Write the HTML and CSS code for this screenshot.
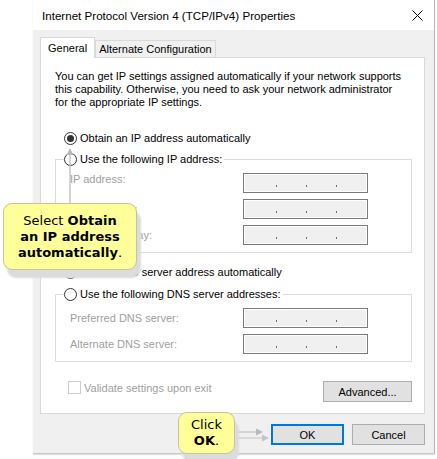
FILE: index.html
```html
<!DOCTYPE html>
<html lang="en">
<head>
    <meta charset="UTF-8">
    <title>Internet Protocol Version 4 (TCP/IPv4) Properties</title>
    <link rel="stylesheet" href="styles.css">
</head>
<body>
    <div class="screen">
        <div class="dialog">
            <div class="titlebar">
                <span class="title">Internet Protocol Version 4 (TCP/IPv4) Properties</span>
                <svg class="close" width="11" height="11" viewBox="0 0 11 11">
                    <path d="M0.5 0.5 L10.5 10.5 M10.5 0.5 L0.5 10.5" stroke="#000" stroke-width="1"/>
                </svg>
            </div>

            <div class="body">
                <div class="tabs">
                    <div class="tab active">General</div>
                    <div class="tab">Alternate Configuration</div>
                </div>

                <div class="panel">
                    <p class="intro">You can get IP settings assigned automatically if your network supports<br>this capability. Otherwise, you need to ask your network administrator<br>for the appropriate IP settings.</p>

                    <div class="option first"><span class="radio checked"></span>Obtain an IP address automatically</div>

                    <fieldset class="group">
                        <legend><span class="radio"></span>Use the following IP address:</legend>
                        <div class="field top"><span>IP address:</span><div class="ipbox"><i></i><i></i><i></i></div></div>
                        <div class="field"><span>Subnet mask:</span><div class="ipbox"><i></i><i></i><i></i></div></div>
                        <div class="field"><span>Default gateway:</span><div class="ipbox"><i></i><i></i><i></i></div></div>
                    </fieldset>

                    <div class="option dns"><span class="radio checked"></span>Obtain DNS server address automatically</div>

                    <fieldset class="group group-dns">
                        <legend><span class="radio"></span>Use the following DNS server addresses:</legend>
                        <div class="field"><span>Preferred DNS server:</span><div class="ipbox"><i></i><i></i><i></i></div></div>
                        <div class="field"><span>Alternate DNS server:</span><div class="ipbox"><i></i><i></i><i></i></div></div>
                    </fieldset>

                    <div class="panel-foot">
                        <div class="check"><span class="box"></span>Validate settings upon exit</div>
                        <button class="btn advanced">Advanced...</button>
                    </div>
                </div>

                <div class="actions">
                    <button class="btn default">OK</button>
                    <button class="btn">Cancel</button>
                </div>
            </div>
        </div>

        <!-- tutorial callouts -->
        <svg class="pointers" width="437" height="459" viewBox="0 0 437 459">
            <path d="M70 203 V152" stroke="#b8b8b8" stroke-width="1.2" fill="none"/>
            <path d="M66.5 155 L70 148 L73.5 155 Z" fill="#b8b8b8"/>
            <path d="M236 432 H258" stroke="#c0c0c0" stroke-width="1.2"/>
            <path d="M256 428.5 L263 432 L256 435.5 Z" fill="#b8b8b8"/>
            <path d="M236 438 H264" stroke="#c8c8c8" stroke-width="1.2"/>
            <path d="M262 434.5 L269 438 L262 441.5 Z" fill="#c4c4c4"/>
        </svg>

        <div class="callout callout-select">
            <div>Select <b>Obtain</b><br><b>an IP address</b><br><b>automatically</b>.</div>
        </div>
        <div class="callout callout-ok">
            <div>Click<br><b>OK</b>.</div>
        </div>
    </div>
</body>
</html>
```

FILE: styles.css
```css
body {
    margin: 0;
    background-color: #ffffff;
    font-family: "Liberation Sans", Arial, sans-serif;
    font-size: 11px;
    color: #000;
}
.screen {
    position: relative;
    width: 437px;
    height: 459px;
    padding-left: 33px;
    box-sizing: border-box;
    overflow: hidden;
}
.dialog {
    width: 401px;
    height: 453px;
    display: flex;
    flex-direction: column;
    border-right: 1px solid #b5b5b5;
    box-shadow: 0 1px 0 #c8c8c8, 0 2px 1px #e0e0e0;
}
.titlebar {
    height: 30px;
    background: #fff;
    display: flex;
    align-items: center;
    justify-content: space-between;
    padding: 0 11px 0 9px;
    flex-shrink: 0;
}
.title {
    font-size: 11.6px;
    color: #000;
}
.body {
    flex: 1;
    background: #f0f0f0;
    padding: 7px 9px 0 7px;
}
.tabs {
    display: flex;
    align-items: flex-end;
    height: 20px;
}
.tab {
    height: 17px;
    line-height: 16px;
    padding: 0 3px;
    border: 1px solid #d9d9d9;
    border-bottom: none;
    background: #f0f0f0;
    box-sizing: border-box;
}
.tab.active {
    height: 21px;
    line-height: 20px;
    padding: 0 7px;
    background: #fff;
    margin-bottom: -1px;
    position: relative;
    z-index: 1;
}
.panel {
    height: 357px;
    box-sizing: border-box;
    background: #fff;
    border: 1px solid #d9d9d9;
    padding: 12px 12px 0 14px;
}
.intro {
    margin: 0;
    line-height: 13px;
}
.option {
    display: flex;
    align-items: center;
    gap: 3px;
    height: 14px;
    padding-left: 9px;
}
.option.first {
    margin-top: 22px;
}
.option.dns {
    margin-top: 12px;
}
.radio {
    width: 13px;
    height: 13px;
    box-sizing: border-box;
    border: 1px solid #333;
    border-radius: 50%;
    background: #fff;
    display: flex;
    align-items: center;
    justify-content: center;
    flex-shrink: 0;
}
.radio.checked::after {
    content: "";
    width: 7px;
    height: 7px;
    border-radius: 50%;
    background: #333;
}
.group {
    margin: 7px 0 0;
    border: 1px solid #dcdcdc;
    padding: 7px 43px 7px 14px;
}
.group-dns {
    margin-top: 8px;
}
.group legend {
    margin-left: -6px;
    padding: 0 2px 0 0;
    display: flex;
    align-items: center;
    gap: 3px;
    height: 14px;
}
.field {
    display: flex;
    justify-content: space-between;
    align-items: center;
    height: 20px;
    color: #a0a0a0;
}
.field.top {
    align-items: flex-start;
    line-height: 13px;
}
.field + .field {
    margin-top: 6px;
}
.ipbox {
    width: 125px;
    height: 20px;
    box-sizing: border-box;
    border: 1px solid #7a7a7a;
    box-shadow: inset 0 0 0 1px #fff;
    background: #f0f0f0;
    display: flex;
    gap: 29px;
    padding: 11px 0 0 32px;
}
.ipbox i {
    width: 1px;
    height: 2px;
    background: #6d6d6d;
}
.panel-foot {
    display: flex;
    justify-content: space-between;
    align-items: flex-start;
    margin-top: 19px;
}
.check {
    display: flex;
    align-items: center;
    gap: 3px;
    padding-left: 13px;
    color: #a0a0a0;
    height: 13px;
}
.check .box {
    width: 13px;
    height: 13px;
    box-sizing: border-box;
    border: 1px solid #cccccc;
}
.btn {
    height: 21px;
    width: 73px;
    padding: 0;
    font-family: inherit;
    font-size: 11px;
    color: #000;
    background: #e1e1e1;
    border: 1px solid #adadad;
}
.btn.advanced {
    width: 89px;
}
.btn.default {
    border-color: #0078d7;
    box-shadow: inset 0 0 0 1px #0078d7;
}
.actions {
    display: flex;
    justify-content: flex-end;
    gap: 8px;
    margin-top: 10px;
}
.pointers {
    position: absolute;
    left: 0;
    top: 0;
    pointer-events: none;
}
.callout {
    position: absolute;
    box-sizing: border-box;
    background: #ffff99;
    border: 1px solid #c4c4a4;
    border-radius: 9px;
    box-shadow: 4px 8px 2px #dcdcdc;
    font-family: "DejaVu Sans", Verdana, sans-serif;
    font-size: 13px;
    line-height: 16px;
    text-align: center;
    display: flex;
    align-items: center;
    justify-content: center;
    color: #000;
}
.callout-select {
    left: 3px;
    top: 203px;
    width: 134px;
    height: 67px;
}
.callout-ok {
    left: 178px;
    top: 412px;
    width: 57px;
    height: 42px;
}
```
